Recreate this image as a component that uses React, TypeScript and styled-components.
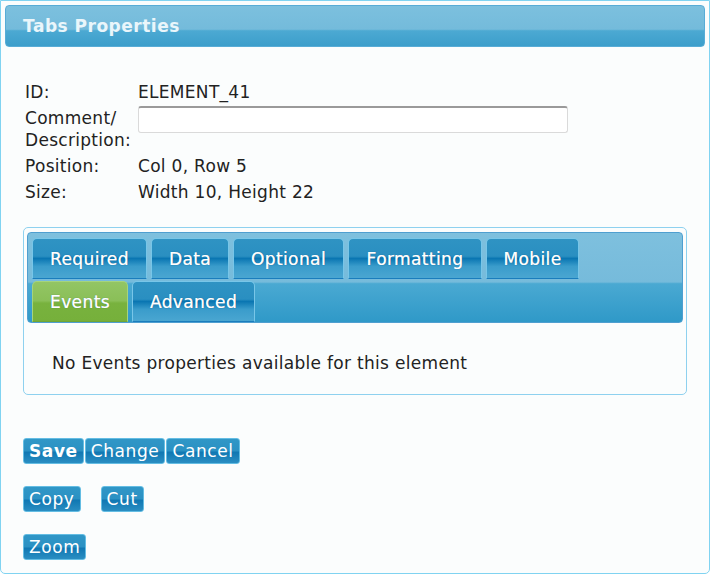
import React from 'react'
import styled, { createGlobalStyle, css } from 'styled-components'

const GlobalStyle = createGlobalStyle`
  html, body {
    margin: 0;
    padding: 0;
    background: #ffffff;
  }
  body {
    font-family: 'DejaVu Sans', Verdana, sans-serif;
    color: #222222;
  }
`

const Frame = styled.div`
  box-sizing: border-box;
  width: 710px;
  height: 574px;
  border: 1px solid #80d3f1;
  border-radius: 0 0 5px 5px;
  background: #fbfdfd;
  padding: 4px 4px 0 4px;
`

const Header = styled.div`
  height: 42px;
  border-radius: 4px;
  border: 1px solid #58acd6;
  box-sizing: border-box;
  background: linear-gradient(
    to bottom,
    #7cc0de 0%,
    #74bbdb 58%,
    #4ca9d2 62%,
    #3c9ecb 100%
  );
  display: flex;
  align-items: center;
  padding-left: 17px;
`

const Title = styled.h1`
  margin: 0;
  font-size: 17px;
  font-weight: bold;
  color: #eaf6fb;
  letter-spacing: 0.5px;
`

const Body = styled.div`
  padding: 34px 18px 0 18px;
`

const PropGrid = styled.div`
  display: grid;
  grid-template-columns: 113px 430px;
  row-gap: 4px;
  padding-left: 2px;
  font-size: 17px;
  letter-spacing: 0.3px;
  line-height: 22px;
  color: #222;
`

const Label = styled.div``

const Value = styled.div``

const CommentInput = styled.input`
  box-sizing: border-box;
  display: block;
  width: 430px;
  height: 27px;
  margin-top: -1px;
  border: 1px solid #dadada;
  border-top: 2px solid #9a9a9a;
  border-radius: 3px;
  background: #ffffff;
`

const TabBox = styled.div`
  margin-top: 24px;
  border: 1px solid #8ed1ef;
  border-radius: 5px;
  padding: 4px 3px 0 3px;
  height: 168px;
  box-sizing: border-box;
`

const TabBar = styled.div`
  border-radius: 4px;
  border: 1px solid #4f9fd0;
  background: linear-gradient(
    to bottom,
    #7ec0de 0%,
    #76bbdb 55%,
    #4aa9d2 57%,
    #2f99c8 100%
  );
  padding: 5px 4px 0 4px;
  display: flex;
  flex-wrap: wrap;
  column-gap: 4px;
  row-gap: 2px;
  width: 656px;
  box-sizing: border-box;
`

const blueTab = css`
  background: linear-gradient(
    to bottom,
    #2f93c3 0%,
    #2a8fc1 44%,
    #0a76b2 50%,
    #3a9ccb 70%,
    #4aa6d1 100%
  );
  border-bottom: 1px solid #1a7dbd;
`

const greenTab = css`
  background: linear-gradient(
    to bottom,
    #93c564 0%,
    #8abf58 48%,
    #78b23e 54%,
    #76b03b 100%
  );
  border-bottom: 1px solid #6fa636;
`

const Tab = styled.div<{ $active?: boolean; $w: number }>`
  box-sizing: border-box;
  width: ${p => p.$w}px;
  height: 41px;
  border: 1px solid ${p => (p.$active ? '#a6d47c' : '#78c6e8')};
  border-radius: 5px 5px 0 0;
  ${p => (p.$active ? greenTab : blueTab)}
  color: #ffffff;
  font-size: 17px;
  letter-spacing: 0.4px;
  display: flex;
  align-items: center;
  justify-content: center;
  text-shadow: 0 0 1px rgba(0, 60, 100, 0.5), 0 0 0 #ffffff;
`

const TabContent = styled.div`
  padding: 30px 0 0 25px;
  font-size: 17px;
  letter-spacing: 0.3px;
  color: #222;
`

const ButtonRow = styled.div<{ $gap: number }>`
  display: flex;
  gap: ${p => p.$gap}px;
  margin-top: 22px;
  &:first-of-type {
    margin-top: 43px;
  }
`

const Button = styled.button<{ $bold?: boolean }>`
  box-sizing: border-box;
  height: 26px;
  padding: 0 5px;
  border: 1px solid #64bde3;
  border-radius: 3px;
  background: linear-gradient(
    to bottom,
    #3097c7 0%,
    #2b91c3 48%,
    #1178b3 56%,
    #2a8ec2 100%
  );
  color: #ffffff;
  font-family: 'DejaVu Sans', Verdana, sans-serif;
  font-size: 17px;
  letter-spacing: 0.6px;
  font-weight: ${p => (p.$bold ? 'bold' : 'normal')};
  line-height: 24px;
  cursor: pointer;
`

const Buttons = styled.div``

const tabs = [
  { name: 'Required', w: 115 },
  { name: 'Data', w: 78 },
  { name: 'Optional', w: 111 },
  { name: 'Formatting', w: 134 },
  { name: 'Mobile', w: 93 },
  { name: 'Events', w: 96, active: true },
  { name: 'Advanced', w: 123 },
]

export default function App() {
  return (
    <>
      <GlobalStyle />
      <Frame>
        <Header>
          <Title>Tabs Properties</Title>
        </Header>
        <Body>
          <PropGrid>
            <Label>ID:</Label>
            <Value>ELEMENT_41</Value>
            <Label>
              Comment/
              <br />
              Description:
            </Label>
            <Value>
              <CommentInput type="text" />
            </Value>
            <Label>Position:</Label>
            <Value>Col 0, Row 5</Value>
            <Label>Size:</Label>
            <Value>Width 10, Height 22</Value>
          </PropGrid>
          <TabBox>
            <TabBar>
              {tabs.map(t => (
                <Tab key={t.name} $w={t.w} $active={t.active}>
                  {t.name}
                </Tab>
              ))}
            </TabBar>
            <TabContent>No Events properties available for this element</TabContent>
          </TabBox>
          <Buttons>
            <ButtonRow $gap={1}>
              <Button $bold>Save</Button>
              <Button>Change</Button>
              <Button>Cancel</Button>
            </ButtonRow>
            <ButtonRow $gap={20}>
              <Button>Copy</Button>
              <Button>Cut</Button>
            </ButtonRow>
            <ButtonRow $gap={0}>
              <Button>Zoom</Button>
            </ButtonRow>
          </Buttons>
        </Body>
      </Frame>
    </>
  )
}
